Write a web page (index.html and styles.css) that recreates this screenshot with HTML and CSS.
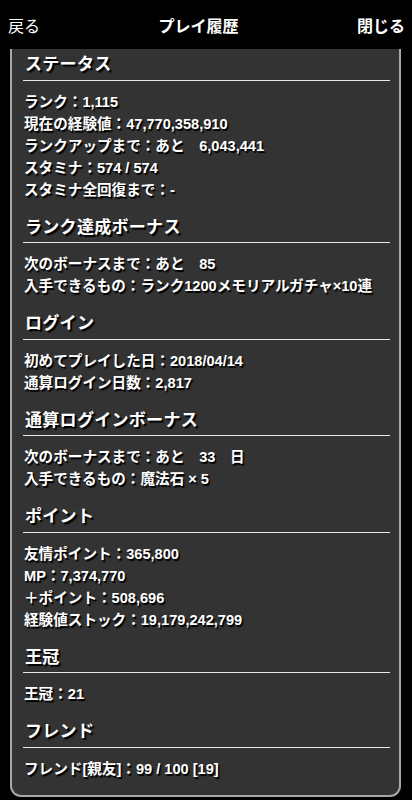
FILE: index.html
```html
<!DOCTYPE html>
<html lang="ja">
<head>
    <meta charset="UTF-8">
    <meta name="viewport" content="width=device-width, initial-scale=1.0">
    <title>プレイ履歴</title>
    <link rel="stylesheet" href="styles.css">
</head>
<body>

<header class="topbar">
    <span class="topbar-back">戻る</span>
    <span class="topbar-title">プレイ履歴</span>
    <span class="topbar-close">閉じる</span>
</header>

<div class="panel">
    <section class="section">
        <h2>ステータス</h2>
        <ul>
            <li>ランク：1,115</li>
            <li>現在の経験値：47,770,358,910</li>
            <li>ランクアップまで：あと　6,043,441</li>
            <li>スタミナ：574 / 574</li>
            <li>スタミナ全回復まで：-</li>
        </ul>
    </section>

    <section class="section">
        <h2>ランク達成ボーナス</h2>
        <ul>
            <li>次のボーナスまで：あと　85</li>
            <li>入手できるもの：ランク1200メモリアルガチャ×10連</li>
        </ul>
    </section>

    <section class="section">
        <h2>ログイン</h2>
        <ul>
            <li>初めてプレイした日：2018/04/14</li>
            <li>通算ログイン日数：2,817</li>
        </ul>
    </section>

    <section class="section">
        <h2>通算ログインボーナス</h2>
        <ul>
            <li>次のボーナスまで：あと　33　日</li>
            <li>入手できるもの：魔法石 × 5</li>
        </ul>
    </section>

    <section class="section">
        <h2>ポイント</h2>
        <ul>
            <li>友情ポイント：365,800</li>
            <li>MP：7,374,770</li>
            <li>＋ポイント：508,696</li>
            <li>経験値ストック：19,179,242,799</li>
        </ul>
    </section>

    <section class="section">
        <h2>王冠</h2>
        <ul>
            <li>王冠：21</li>
        </ul>
    </section>

    <section class="section">
        <h2>フレンド</h2>
        <ul>
            <li>フレンド[親友]：99 / 100 [19]</li>
        </ul>
    </section>
</div>

</body>
</html>
```

FILE: styles.css
```css
body {
    font-family: "Liberation Sans", "Noto Sans CJK JP", sans-serif;
    margin: 0;
    background-color: #000;
    color: #fff;
    width: 412px;
    height: 800px;
    overflow: hidden;
}

.topbar {
    height: 49px;
    display: flex;
    align-items: center;
    justify-content: space-between;
    padding: 0 7px 0 8px;
    font-size: 16px;
    box-sizing: border-box;
}

.topbar-back {
    font-weight: normal;
}

.topbar-title,
.topbar-close {
    font-weight: bold;
}

.panel {
    margin: 0 11px 0 10px;
    padding: 4px 9px 15px 11px;
    background-color: #333;
    border: 2px solid #a8a8a8;
    border-top: none;
    border-radius: 0 0 11px 11px;
}

.section {
    margin-bottom: 15px;
}

.section:last-child {
    margin-bottom: 0;
}

.section h2 {
    margin: 0;
    padding: 0 0 2.5px 2px;
    font-size: 17px;
    line-height: 24px;
    font-weight: bold;
    letter-spacing: 0.3px;
    border-bottom: 1px solid #e8e8e8;
    text-shadow: 2px 2px 1px #000;
}

.section ul {
    list-style: none;
    margin: 0;
    padding: 10px 0 0 1px;
}

.section li {
    font-size: 14.6px;
    line-height: 22px;
    font-weight: bold;
    white-space: nowrap;
    text-shadow: 1.5px 1.5px 1px #000;
}
```
